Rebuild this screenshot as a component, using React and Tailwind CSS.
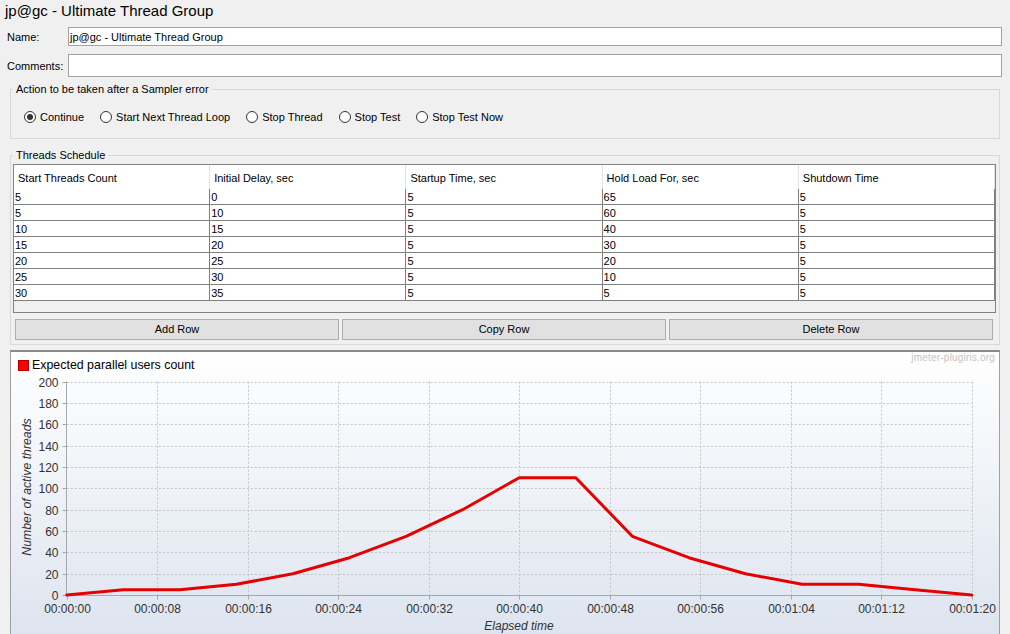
import React from "react";

const rows = [
  ["5", "0", "5", "65", "5"],
  ["5", "10", "5", "60", "5"],
  ["10", "15", "5", "40", "5"],
  ["15", "20", "5", "30", "5"],
  ["20", "25", "5", "20", "5"],
  ["25", "30", "5", "10", "5"],
  ["30", "35", "5", "5", "5"],
];
const headers = ["Start Threads Count", "Initial Delay, sec", "Startup Time, sec", "Hold Load For, sec", "Shutdown Time"];
const radios = ["Continue", "Start Next Thread Loop", "Stop Thread", "Stop Test", "Stop Test Now"];

const X0 = 66.7;
const XS = 905 / 80;
const Y0 = 595;
const YS = 213.33 / 200;
const px = (t) => X0 + t * XS;
const py = (v) => Y0 - v * YS;
const series = [
  [0, 0], [5, 5], [10, 5], [15, 10], [20, 20], [25, 35], [30, 55], [35, 80], [40, 110],
  [45, 110], [50, 55], [55, 35], [60, 20], [65, 10], [70, 10], [75, 5], [80, 0],
];
const xLabels = ["00:00:00", "00:00:08", "00:00:16", "00:00:24", "00:00:32", "00:00:40", "00:00:48", "00:00:56", "00:01:04", "00:01:12", "00:01:20"];

function Radio({ label, checked }) {
  return (
    <div className="flex items-center">
      <span className="w-[12px] h-[12px] rounded-full border border-[#333] bg-white flex items-center justify-center">
        {checked && <span className="w-[6px] h-[6px] rounded-full bg-[#333]" />}
      </span>
      <span className="ml-[4px] text-[11px] leading-[14px]">{label}</span>
    </div>
  );
}

function Chart() {
  const hLines = [];
  for (let k = 1; k <= 10; k++) {
    const y = Math.round(py(k * 20)) + 0.5;
    hLines.push(<line key={"h" + k} x1={X0} x2={px(80)} y1={y} y2={y} stroke="#c4c4c4" strokeDasharray="2 2" />);
  }
  const vLines = [];
  for (let j = 1; j <= 10; j++) {
    const x = Math.round(px(j * 8)) + 0.5;
    vLines.push(<line key={"v" + j} x1={x} x2={x} y1={py(200)} y2={Y0} stroke="#c4c4c4" strokeDasharray="2 2" />);
  }
  return (
    <svg width="988" height="267" viewBox="11 372 988 267" className="block">
      {hLines}
      {vLines}
      <line x1={66.5} x2={66.5} y1={py(200)} y2={Y0 + 0.5} stroke="#a8a8a8" />
      <line x1={66.5} x2={px(80)} y1={595.5} y2={595.5} stroke="#a8a8a8" />
      {Array.from({ length: 11 }).map((_, k) => {
        const y = Math.round(py(k * 20)) + 0.5;
        return (
          <g key={"yl" + k}>
            <line x1={62.5} x2={66.5} y1={y} y2={y} stroke="#a8a8a8" />
            <text x={58.5} y={y + 4} textAnchor="end" fontSize="12" fill="#333" fontFamily="'Liberation Sans', Arial, sans-serif">{k * 20}</text>
          </g>
        );
      })}
      {xLabels.map((l, j) => {
        const x = Math.round(px(j * 8)) + 0.5;
        return (
          <g key={"xl" + j}>
            <line x1={x} x2={x} y1={595.5} y2={599.5} stroke="#a8a8a8" />
            <text x={x} y={612.5} textAnchor="middle" fontSize="12" fill="#333" fontFamily="'Liberation Sans', Arial, sans-serif">{l}</text>
          </g>
        );
      })}
      <text x={519} y={629.5} textAnchor="middle" fontSize="12" fontStyle="italic" fill="#333" fontFamily="'Liberation Sans', Arial, sans-serif">Elapsed time</text>
      <text transform="translate(31 487) rotate(-90)" textAnchor="middle" fontSize="12.3" fontStyle="italic" fill="#333" fontFamily="'Liberation Sans', Arial, sans-serif">Number of active threads</text>
      <polyline
        points={series.map(([t, v]) => `${px(t).toFixed(1)},${py(v).toFixed(1)}`).join(" ")}
        fill="none"
        stroke="#e60000"
        strokeWidth="3"
        strokeLinejoin="round"
        strokeLinecap="round"
      />
    </svg>
  );
}

export default function App() {
  return (
    <div className="w-[1010px] h-[634px] overflow-hidden bg-[#f0f0f0] text-black font-['Liberation_Sans',Arial,sans-serif]">
      <div className="h-[22px] pl-[5px] text-[15px] leading-[22px]">jp@gc - Ultimate Thread Group</div>

      <div className="mt-[5px] flex items-center h-[19px]">
        <div className="w-[68px] pl-[7px] text-[11px] leading-[20px]">Name:</div>
        <div className="flex-1 mr-[8px] h-[19px] border border-[#a3a3a3] bg-white pl-[1px] text-[11px] leading-[18px]">jp@gc - Ultimate Thread Group</div>
      </div>

      <div className="mt-[8px] flex items-center h-[23px]">
        <div className="w-[68px] pl-[7px] text-[11px] leading-[24px]">Comments:</div>
        <div className="flex-1 mr-[8px] h-[23px] border border-[#a3a3a3] bg-white" />
      </div>

      <fieldset className="mt-[6px] ml-[10px] mr-[10px] h-[56px] border border-[#d9d9d9] pl-[2px] pr-[3px]">
        <legend className="px-[3px] text-[11px] leading-[12px]">Action to be taken after a Sampler error</legend>
        <div className="mt-[14px] h-[16px] pl-[11px] flex items-center gap-[16px]">
          {radios.map((r, i) => (
            <Radio key={r} label={r} checked={i === 0} />
          ))}
        </div>
      </fieldset>

      <fieldset className="mt-[10px] ml-[10px] mr-[10px] h-[196px] border border-[#d9d9d9] pl-[2px] pr-[3px]">
        <legend className="px-[3px] text-[11px] leading-[12px]">Threads Schedule</legend>
        <div className="mt-[3px] h-[149px] border border-[#828282] bg-[#f0f0f0] flex flex-col">
          <div className="h-[24px] bg-white grid grid-cols-5">
            {headers.map((h) => (
              <div key={h} className="border-r border-[#e3e3e3] pl-[4px] text-[11px] leading-[26px] whitespace-nowrap">{h}</div>
            ))}
          </div>
          {rows.map((r, i) => (
            <div key={i} className="h-[16px] bg-white grid grid-cols-5 border-b border-[#808080]">
              {r.map((c, j) => (
                <div key={j} className="border-r border-[#808080] pl-[1px] text-[11px] leading-[16px]">{c}</div>
              ))}
            </div>
          ))}
        </div>
        <div className="mt-[6px] pl-[2px] pr-[3px] flex gap-[3px]">
          {["Add Row", "Copy Row", "Delete Row"].map((b) => (
            <div key={b} className="flex-1 h-[21px] border border-[#adadad] bg-[#e1e1e1] text-[11px] leading-[19px] text-center">{b}</div>
          ))}
        </div>
      </fieldset>

      <div className="mt-[5px] ml-[10px] w-[990px] h-[290px] border border-[#a0a0a0] border-t-2 border-t-[#8a8a8a] bg-linear-to-b from-white to-[#dde4ef]">
        <div className="h-[20px] flex items-start justify-between">
          <div className="pl-[7px] pt-[7px] flex items-center">
            <span className="w-[11px] h-[11px] bg-[#ff0000] border border-[#b00000]" />
            <span className="ml-[3px] text-[12.4px] leading-[12px]">Expected parallel users count</span>
          </div>
          <div className="pr-[4px] pt-[1px] text-[10px] leading-[10px] tracking-[0.2px] text-[#c4c4c4]">jmeter-plugins.org</div>
        </div>
        <Chart />
      </div>
    </div>
  );
}
